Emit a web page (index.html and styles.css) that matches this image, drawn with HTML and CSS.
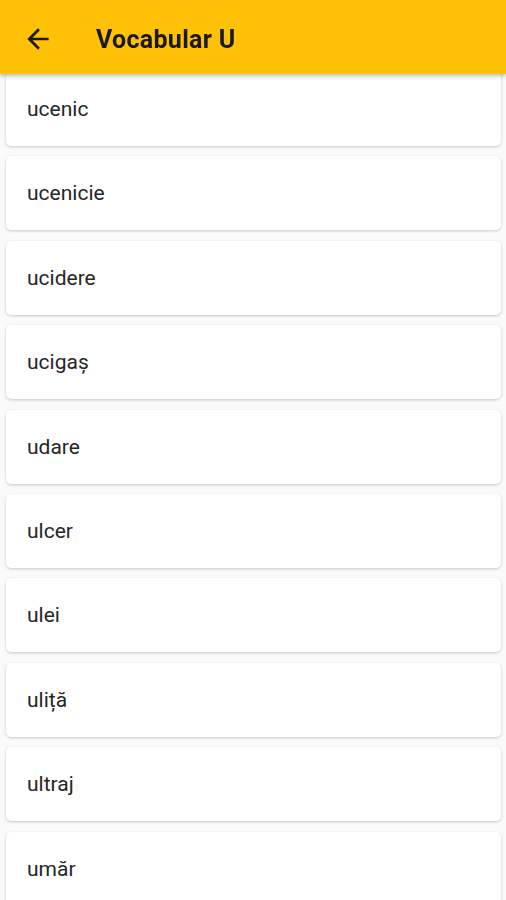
FILE: index.html
```html
<!DOCTYPE html>
<html lang="ro">
<head>
    <meta charset="UTF-8">
    <meta name="viewport" content="width=device-width, initial-scale=1.0">
    <title>Vocabular U</title>
    <link rel="stylesheet" href="styles.css">
</head>
<body>
    <header class="app-bar">
        <button class="back-btn" aria-label="Înapoi">
            <svg width="32" height="32" viewBox="0 0 24 24">
                <path d="M20 11H7.83l5.59-5.59L12 4l-8 8 8 8 1.41-1.41L7.83 13H20v-2z" fill="#1a1a1a"/>
            </svg>
        </button>
        <h1>Vocabular U</h1>
    </header>

    <main class="word-list">
        <div class="word-card">ucenic</div>
        <div class="word-card">ucenicie</div>
        <div class="word-card">ucidere</div>
        <div class="word-card">ucigaș</div>
        <div class="word-card">udare</div>
        <div class="word-card">ulcer</div>
        <div class="word-card">ulei</div>
        <div class="word-card">uliță</div>
        <div class="word-card">ultraj</div>
        <div class="word-card">umăr</div>
    </main>
</body>
</html>
```

FILE: styles.css
```css
body {
    font-family: 'Roboto', 'Noto Sans', sans-serif;
    background-color: #fafafa;
    margin: 0;
    padding: 0;
    overflow: hidden;
}

.app-bar {
    position: fixed;
    top: 0;
    left: 0;
    right: 0;
    height: 74px;
    background-color: #fec108;
    display: flex;
    align-items: center;
    box-shadow: 0 2px 4px rgba(0, 0, 0, 0.25);
    z-index: 10;
}

.back-btn {
    width: 32px;
    height: 32px;
    margin: 4px 0 0 22px;
    padding: 0;
    border: none;
    background: none;
    display: flex;
}

.app-bar h1 {
    margin: 4px 0 0 42px;
    font-size: 25px;
    font-weight: 700;
    color: #1a1a1a;
    letter-spacing: 0.3px;
}

.word-list {
    padding-top: 72px;
    display: flex;
    flex-direction: column;
    gap: 10.4px;
}

.word-card {
    flex: none;
    height: 74px;
    margin: 0 5px 0 6px;
    background-color: #fff;
    border-radius: 5px;
    box-shadow: 0 1px 3px rgba(0, 0, 0, 0.2);
    display: flex;
    align-items: center;
    padding-left: 21px;
    font-size: 21px;
    color: #262626;
}
```
